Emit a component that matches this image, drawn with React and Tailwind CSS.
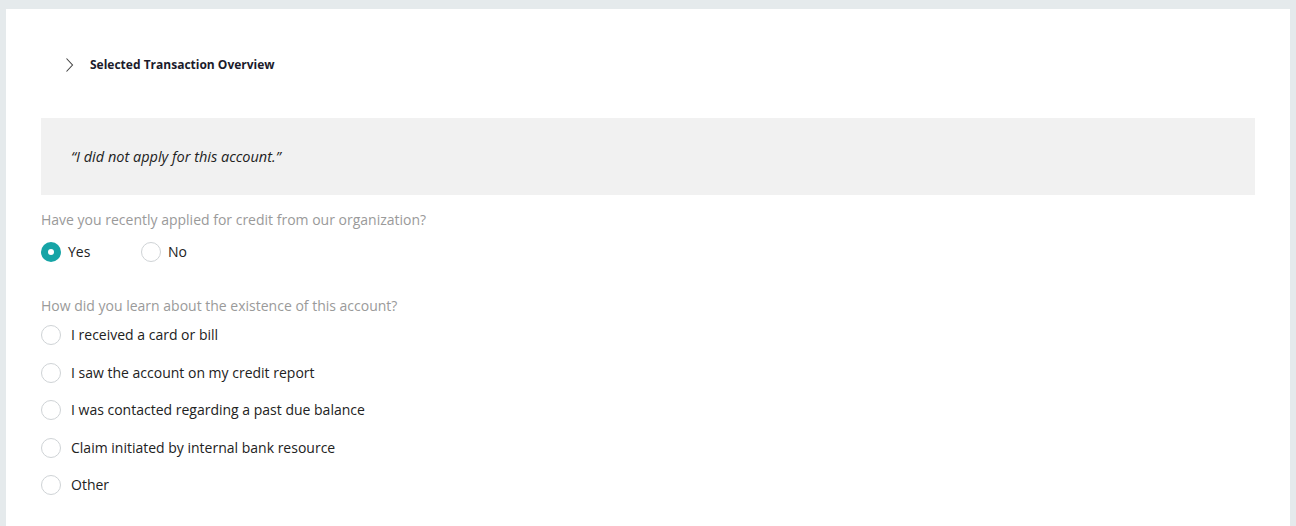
const Radio = ({ checked }) =>
  checked ? (
    <span className="flex h-5 w-5 shrink-0 items-center justify-center rounded-full bg-[#16a4a6]">
      <span className="h-[6px] w-[6px] rounded-full bg-white" />
    </span>
  ) : (
    <span className="h-5 w-5 shrink-0 rounded-full border border-[#cfd3d6] bg-white" />
  )

const options = [
  'I received a card or bill',
  'I saw the account on my credit report',
  'I was contacted regarding a past due balance',
  'Claim initiated by internal bank resource',
  'Other',
]

export default function App() {
  return (
    <div
      className="min-h-[526px] bg-[#e5eaec] pl-[6px] pr-[6px] pt-[9px]"
      style={{ fontFamily: '"Open Sans", sans-serif' }}
    >
      <div className="min-h-[517px] bg-white px-[35px]">
        <div className="flex h-[109px] items-center pl-[24px] pt-[2px]">
          <svg width="9" height="16" viewBox="0 0 9 16" className="mr-[16px]">
            <path d="M1.5 1.5l6 6.5-6 6.5" fill="none" stroke="#444" strokeWidth="1.1" />
          </svg>
          <span className="text-[12px] font-bold text-[#1b1b2b]">
            Selected Transaction Overview
          </span>
        </div>

        <div className="flex h-[77px] items-center bg-[#f1f1f1] pl-[30px]">
          <span className="text-[14.5px] italic text-[#222]">
            “I did not apply for this account.”
          </span>
        </div>

        <div className="mt-[15px] text-sm text-[#9a9a9a]">
          Have you recently applied for credit from our organization?
        </div>
        <div className="mt-[12px] flex items-center">
          <div className="flex w-[100px] items-center gap-[7px]">
            <Radio checked />
            <span className="text-sm text-[#222]">Yes</span>
          </div>
          <div className="flex items-center gap-[7px]">
            <Radio />
            <span className="text-sm text-[#222]">No</span>
          </div>
        </div>

        <div className="mt-[34px] text-sm text-[#9a9a9a]">
          How did you learn about the existence of this account?
        </div>
        <div className="mt-[9px] flex flex-col gap-[17.5px] pb-[20px]">
          {options.map((o) => (
            <div key={o} className="flex items-center gap-[10px]">
              <Radio />
              <span className="text-sm text-[#222]">{o}</span>
            </div>
          ))}
        </div>
      </div>
    </div>
  )
}
